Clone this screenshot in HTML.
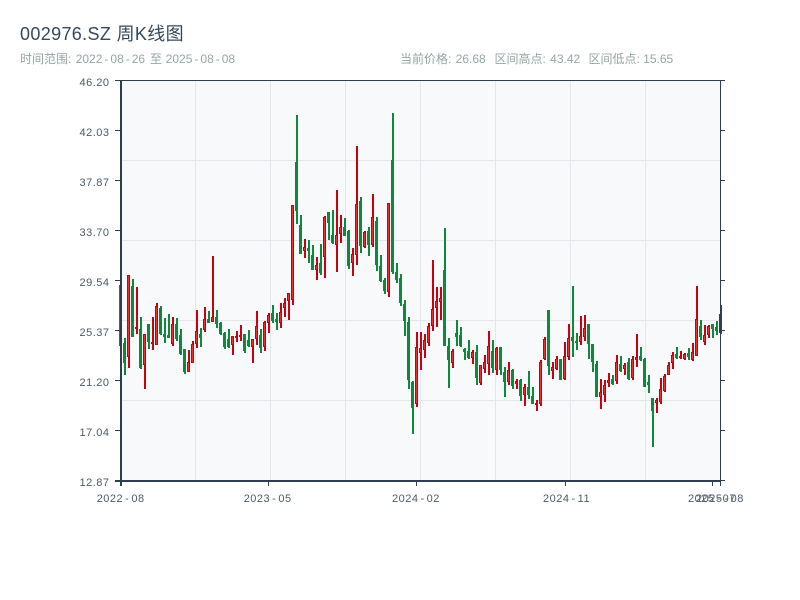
<!DOCTYPE html>
<html><head><meta charset="utf-8"><style>
html,body{margin:0;padding:0;background:#fff;width:800px;height:600px;overflow:hidden}
svg{display:block}
text{font-family:"Liberation Sans","Noto Sans CJK SC",sans-serif}
</style></head><body>
<svg width="800" height="600" viewBox="0 0 800 600" xmlns="http://www.w3.org/2000/svg">
<rect x="120" y="80" width="600" height="400" fill="#f8f9fa"/>
<g stroke="#e3e6ea" stroke-width="1" shape-rendering="crispEdges" fill="none">
<path d="M120 160.500H720M120 240.500H720M120 320.500H720M120 400.500H720"/>
<path d="M195.500 80V480M270.500 80V480M345.500 80V480M420.500 80V480M495.500 80V480M570.500 80V480M645.500 80V480"/>
</g>
<g fill="none" shape-rendering="crispEdges">
<path stroke="#0a8a3a" stroke-width="2" d="M121 283V346M125 338V375M133 279V337M141 317V369M149 324V349M161 306V335M165 318V343M169 314V338M177 318V341M181 329V355M185 349V374M201 328V347M209 311V323M217 310V328M221 322V335M225 332V349M229 329V348M245 334V353M249 330V347M261 329V353M273 305V323M277 313V330M297 115V224M301 215V254M309 240V263M313 245V270M321 244V275M329 212V240M333 210V244M345 218V236M349 230V269M361 197V253M369 227V256M377 217V271M381 255V282M385 278V294M393 113V274M397 263V283M401 274V306M405 300V336M409 317V389M413 381V434M445 228V346M449 338V388M457 320V346M461 327V347M465 348V360M469 340V359M477 345V385M493 340V373M501 347V375M505 367V397M513 369V389M521 379V401M529 371V399M533 387V404M549 310V375M561 359V380M573 286V357M577 333V350M589 324V359M593 344V372M597 361V397M613 375V385M621 356V372M629 358V380M641 347V361M645 358V387M649 375V393M653 398V447M677 347V359M689 348V360M701 320V340M713 324V338M717 321V335"/>
<path stroke="#0a8a3a" stroke-width="3" d="M120.500 285V346M124.500 343V363M132.500 286V337M140.500 329V368M148.500 324V342M160.500 308V334M164.500 334V337M168.500 335V338M176.500 324V339M180.500 335V354M184.500 349V372M200.500 334V338M208.500 319V323M216.500 317V324M220.500 323V334M224.500 333V347M228.500 339V347M244.500 334V351M248.500 340V346M260.500 335V348M272.500 313V321M276.500 319V322M296.500 162V211M300.500 225V254M308.500 248V251M312.500 255V270M320.500 263V273M328.500 212V223M332.500 235V243M344.500 227V236M348.500 231V266M360.500 201V246M368.500 231V245M376.500 221V265M380.500 266V281M384.500 280V291M392.500 160V272M396.500 272V280M400.500 278V303M404.500 304V321M408.500 322V380M412.500 382V408M444.500 270V346M448.500 346V360M456.500 333V337M460.500 335V346M464.500 349V352M468.500 351V358M476.500 352V378M492.500 351V368M500.500 347V370M504.500 372V382M512.500 370V386M520.500 380V396M528.500 387V395M532.500 396V404M548.500 310V366M560.500 359V380M572.500 337V341M576.500 341V343M588.500 324V344M592.500 344V362M596.500 364V397M612.500 379V384M620.500 364V371M628.500 362V379M640.500 356V360M644.500 359V387M648.500 382V385M652.500 398V411M676.500 354V358M688.500 353V357M700.500 326V337M712.500 324V329M716.500 327V331"/>
<path stroke="#c8000f" stroke-width="2" d="M129 275V368M137 287V334M145 334V389M153 317V350M157 303V345M173 317V346M189 350V372M193 341V363M197 310V348M205 307V332M213 256V322M233 336V355M237 331V342M241 325V341M253 339V363M257 311V345M265 321V351M269 313V333M281 303V328M285 298V317M289 293V320M293 205V305M305 239V258M317 257V280M325 216V278M337 190V272M341 215V243M353 248V276M357 146V265M365 231V248M373 194V247M389 203V297M417 332V407M421 332V370M425 334V358M429 323V346M433 260V331M437 287V327M441 287V320M453 349V368M473 350V364M481 365V385M485 355V373M489 331V375M497 347V375M509 362V385M517 379V389M525 384V406M537 400V411M541 360V406M545 337V360M553 362V379M557 356V370M565 342V380M569 324V360M581 316V345M585 315V341M601 379V409M605 380V402M609 373V387M617 355V384M625 363V375M633 356V380M637 334V367M657 398V413M661 378V404M665 374V392M669 362V375M673 352V369M681 351V359M685 353V360M693 343V361M697 286V356M705 325V345M709 325V338M721 305V334"/>
<path stroke="#c8000f" stroke-width="3" d="M128.500 275V357M136.500 327V329M144.500 334V365M152.500 342V344M156.500 306V345M172.500 324V344M188.500 362V372M192.500 344V363M196.500 331V344M204.500 319V330M212.500 317V322M232.500 336V345M236.500 336V338M240.500 335V337M252.500 339V347M256.500 326V339M264.500 322V347M268.500 315V323M280.500 312V323M284.500 303V308M288.500 293V301M292.500 205V300M304.500 247V251M316.500 265V270M324.500 217V257M336.500 235V245M340.500 227V234M352.500 254V263M356.500 204V255M364.500 232V247M372.500 217V245M388.500 203V292M416.500 347V404M420.500 348V353M424.500 340V350M428.500 326V343M432.500 309V326M436.500 301V308M440.500 298V302M452.500 351V363M472.500 352V358M480.500 365V383M484.500 362V369M488.500 346V364M496.500 348V370M508.500 370V382M516.500 381V384M524.500 387V395M536.500 403V405M540.500 362V404M544.500 339V359M552.500 367V371M556.500 359V369M564.500 356V379M568.500 338V357M580.500 336V342M584.500 328V337M600.500 392V397M604.500 385V395M608.500 380V383M616.500 362V381M624.500 365V369M632.500 359V378M636.500 357V360M656.500 400V403M660.500 389V402M664.500 376V391M668.500 365V375M672.500 355V363M680.500 356V358M684.500 354V359M692.500 352V360M696.500 319V356M704.500 335V342M708.500 326V335M720.500 314V333"/>
<path stroke="#f22c2c" stroke-width="1" d="M128.500 276V356M144.500 335V364M156.500 307V344M172.500 325V343M188.500 363V371M192.500 345V362M196.500 332V343M204.500 320V329M212.500 318V321M232.500 337V344M252.500 340V346M256.500 327V338M264.500 323V346M268.500 316V322M280.500 313V322M284.500 304V307M288.500 294V300M292.500 206V299M304.500 248V250M316.500 266V269M324.500 218V256M336.500 236V244M340.500 228V233M352.500 255V262M356.500 205V254M364.500 233V246M372.500 218V244M388.500 204V291M416.500 348V403M420.500 349V352M424.500 341V349M428.500 327V342M432.500 310V325M436.500 302V307M440.500 299V301M452.500 352V362M472.500 353V357M480.500 366V382M484.500 363V368M488.500 347V363M496.500 349V369M508.500 371V381M516.500 382V383M524.500 388V394M540.500 363V403M544.500 340V358M552.500 368V370M556.500 360V368M564.500 357V378M568.500 339V356M580.500 337V341M584.500 329V336M600.500 393V396M604.500 386V394M608.500 381V382M616.500 363V380M624.500 366V368M632.500 360V377M636.500 358V359M656.500 401V402M660.500 390V401M664.500 377V390M668.500 366V374M672.500 356V362M684.500 355V358M692.500 353V359M696.500 320V355M704.500 336V341M708.500 327V334"/>
</g>
<g stroke="#2c3e50" fill="none" shape-rendering="crispEdges">
<path stroke-width="1" d="M115 80.500H725M720.500 80V481"/>
<path stroke-width="2" d="M121 80V486M115 481H721"/>
<path stroke-width="1" d="M115 130.500H120M115 180.500H120M115 230.500H120M115 280.500H120M115 330.500H120M115 380.500H120M115 430.500H120"/>
<path stroke-width="1" d="M720 130.500H725M720 180.500H725M720 230.500H725M720 280.500H725M720 330.500H725M720 380.500H725M720 430.500H725M720 480.500H725"/>
<path stroke-width="1" d="M268.500 481V486M416.500 481V486M565.500 481V486M712.500 481V486M720.500 481V486"/>
</g>
<text x="20" y="40" font-size="18" fill="#34495e" letter-spacing=".35">002976.SZ 周K线图</text>
<g font-size="12" fill="#95a5a6">
<text x="20" y="63">时间范围:</text>
<text x="75.700" y="63">2022<tspan dx="2">-</tspan><tspan dx="2">08</tspan><tspan dx="2">-</tspan><tspan dx="2">26</tspan></text>
<text x="150" y="63">至</text>
<text x="165.700" y="63">2025<tspan dx="2">-</tspan><tspan dx="2">08</tspan><tspan dx="2">-</tspan><tspan dx="2">08</tspan></text>
<text x="400" y="63">当前价格:<tspan dx="4.300">26.68</tspan></text>
<text x="494.500" y="63">区间高点:<tspan dx="4.300">43.42</tspan></text>
<text x="588.500" y="63">区间低点: 15.65</text>
</g>
<g font-size="11" fill="#4a5a6a" text-anchor="end" letter-spacing=".5">
<text x="109.500" y="86">46.20</text><text x="109.500" y="136">42.03</text><text x="109.500" y="186">37.87</text><text x="109.500" y="236">33.70</text><text x="109.500" y="286">29.54</text><text x="109.500" y="336">25.37</text><text x="109.500" y="386">21.20</text><text x="109.500" y="436">17.04</text><text x="109.500" y="486">12.87</text>
</g>
<g font-size="11" fill="#4a5a6a" letter-spacing=".5">
<text x="96.700" y="502">2022<tspan dx="2">-</tspan><tspan dx="2">08</tspan></text>
<text x="243.700" y="502">2023<tspan dx="2">-</tspan><tspan dx="2">05</tspan></text>
<text x="392" y="502">2024<tspan dx="2">-</tspan><tspan dx="2">02</tspan></text>
<text x="543" y="502">2024<tspan dx="2">-</tspan><tspan dx="2">11</tspan></text>
<text x="688" y="502">2025<tspan dx="2">-</tspan><tspan dx="2">07</tspan></text>
<text x="696" y="502">2025<tspan dx="2">-</tspan><tspan dx="2">08</tspan></text>
</g>
</svg>
</body></html>
